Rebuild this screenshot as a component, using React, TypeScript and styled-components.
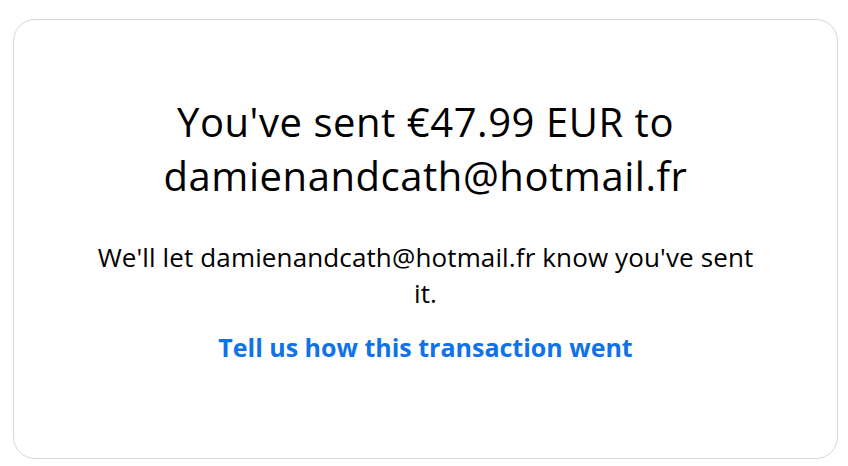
import styled, { createGlobalStyle } from "styled-components";

const colors = {
  border: "#dbd8d0",
  link: "#1072eb",
};

const GlobalStyle = createGlobalStyle`
  html, body {
    margin: 0;
    padding: 0;
    background: #ffffff;
  }
  body {
    font-family: "Open Sans", "Noto Sans", sans-serif;
    color: #000;
  }
`;

const Page = styled.div`
  width: 848px;
  height: 466px;
  box-sizing: border-box;
  padding: 19px 10px 7px 13px;
`;

const Card = styled.section`
  box-sizing: border-box;
  height: 440px;
  border: 1px solid ${colors.border};
  border-radius: 22px;
  display: flex;
  flex-direction: column;
  align-items: center;
  padding: 75px 70px 0;
  text-align: center;
`;

const Title = styled.h1`
  margin: 0;
  font-size: 40px;
  font-weight: 400;
  line-height: 54px;
  letter-spacing: 0.55px;
  max-width: 580px;
  color: #000;
`;

const Message = styled.p`
  margin: 36px 0 0;
  font-size: 26px;
  line-height: 36px;
  letter-spacing: 0.13px;
  max-width: 670px;
`;

const FeedbackLink = styled.a`
  margin-top: 19px;
  font-size: 25px;
  font-weight: 700;
  line-height: 34px;
  color: ${colors.link};
  text-decoration: none;
  cursor: pointer;
`;

export default function App() {
  return (
    <>
      <GlobalStyle />
      <Page>
        <Card>
          <Title>You've sent €47.99 EUR to damienandcath@hotmail.fr</Title>
          <Message>
            We'll let damienandcath@hotmail.fr know you've sent it.
          </Message>
          <FeedbackLink href="#">Tell us how this transaction went</FeedbackLink>
        </Card>
      </Page>
    </>
  );
}
